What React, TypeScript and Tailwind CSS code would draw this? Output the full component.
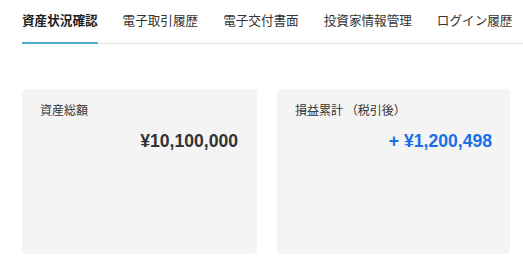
const tabs = ["資産状況確認", "電子取引履歴", "電子交付書面", "投資家情報管理", "ログイン履歴"];

export default function App() {
  return (
    <div className="w-[523px] h-[263px] bg-white overflow-hidden font-['Noto_Sans_CJK_JP','Noto_Sans',sans-serif] text-[#333]">
      <nav className="ml-[22px] flex gap-[25px] border-b border-[#e2e2e2] whitespace-nowrap">
        {tabs.map((t, i) => (
          <div
            key={t}
            className={
              "h-[44px] -mb-px flex items-center pb-[2px] text-[12.6px] border-b-2 " +
              (i === 0 ? "font-bold border-[#4aa8cc] text-[#222]" : "border-transparent text-[#333]")
            }
          >
            {t}
          </div>
        ))}
      </nav>

      <div className="mt-[45px] ml-[22px] mr-[13px] grid grid-cols-[235px_233px] gap-[20px]">
        <div className="h-[165px] rounded bg-[#f4f4f4] pl-[18px] pr-[19px] pt-[12px]">
          <div className="text-[12px] leading-[18px] text-[#333]">資産総額</div>
          <div className="mt-[11px] text-right font-['Liberation_Sans',sans-serif] font-bold text-[17.6px] leading-[22px] text-[#333]">
            ¥10,100,000
          </div>
        </div>
        <div className="h-[165px] rounded bg-[#f4f4f4] pl-[18px] pr-[18px] pt-[12px]">
          <div className="text-[12px] leading-[18px] text-[#333]">損益累計 （税引後）</div>
          <div className="mt-[11px] text-right font-['Liberation_Sans',sans-serif] font-bold text-[17.6px] leading-[22px] text-[#1a6fe6]">
            + ¥1,200,498
          </div>
        </div>
      </div>
    </div>
  );
}
